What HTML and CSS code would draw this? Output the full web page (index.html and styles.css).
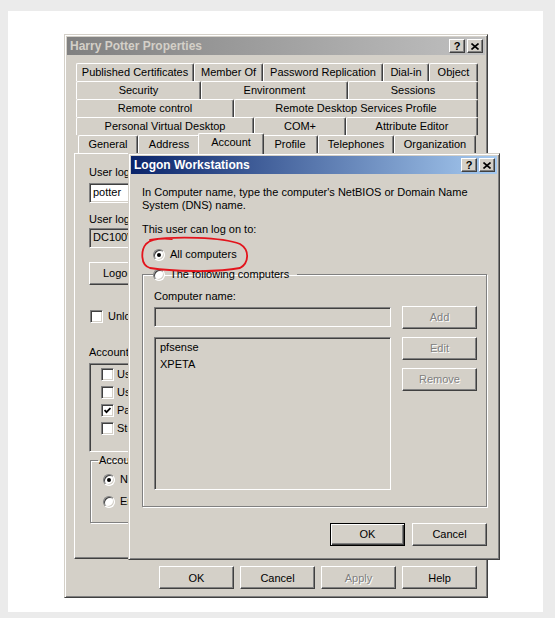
FILE: index.html
```html
<!DOCTYPE html>
<html lang="en">
<head>
  <meta charset="UTF-8">
  <meta name="viewport" content="width=device-width, initial-scale=1.0">
  <title>Harry Potter Properties - Logon Workstations</title>
  <link rel="stylesheet" href="styles.css">
</head>
<body>
  <div class="card">

    <!-- Back window: user properties -->
    <div class="window props">
      <div class="titlebar inactive">
        <span class="title">Harry Potter Properties</span>
        <div class="title-btns">
          <span class="tbtn">?</span>
          <span class="tbtn"><svg width="8" height="7" viewBox="0 0 8 7"><path d="M0.5 0.5 L7.5 6.5 M7.5 0.5 L0.5 6.5" stroke="#000" stroke-width="1.6"/></svg></span>
        </div>
      </div>

      <div class="sheet">
        <div class="tabs">
          <div class="tabrow r1">
            <span class="tab">Published Certificates</span>
            <span class="tab">Member Of</span>
            <span class="tab">Password Replication</span>
            <span class="tab">Dial-in</span>
            <span class="tab">Object</span>
          </div>
          <div class="tabrow r2">
            <span class="tab">Security</span>
            <span class="tab">Environment</span>
            <span class="tab">Sessions</span>
          </div>
          <div class="tabrow r3">
            <span class="tab">Remote control</span>
            <span class="tab">Remote Desktop Services Profile</span>
          </div>
          <div class="tabrow r4">
            <span class="tab">Personal Virtual Desktop</span>
            <span class="tab">COM+</span>
            <span class="tab">Attribute Editor</span>
          </div>
          <div class="tabrow r5">
            <span class="tab">General</span>
            <span class="tab">Address</span>
            <span class="tab on">Account</span>
            <span class="tab">Profile</span>
            <span class="tab">Telephones</span>
            <span class="tab">Organization</span>
          </div>
        </div>

        <div class="panel">
          <div class="label first">User logon name:</div>
          <div class="field-row">
            <div class="field logon-name">potter</div>
            <div class="field domain">@hogwarts.local</div>
          </div>
          <div class="label second">User logon name (pre-Windows 2000):</div>
          <div class="field-row tight">
            <div class="field readonly">DC100\</div>
            <div class="field logon-name">potter</div>
          </div>
          <div class="btn-row">
            <span class="btn wide">Logon Hours...</span>
            <span class="btn wide">Log On To...</span>
          </div>
          <div class="opt unlock"><span class="check"></span>Unlock account</div>
          <div class="label options">Account options:</div>
          <div class="option-list">
            <div class="opt"><span class="check"></span>User must change password at next logon</div>
            <div class="opt"><span class="check"></span>User cannot change password</div>
            <div class="opt"><span class="check"><svg width="7" height="7" viewBox="0 0 7 7"><path d="M0.5 3 L2.5 5.2 L6.5 1" fill="none" stroke="#000" stroke-width="1.8"/></svg></span>Password never expires</div>
            <div class="opt"><span class="check"></span>Store password using reversible encryption</div>
          </div>
          <fieldset class="group expires">
            <legend>Account expires</legend>
            <div class="opt first-radio"><span class="radio on"></span>Never</div>
            <div class="opt"><span class="radio"></span>End of:</div>
          </fieldset>
        </div>
      </div>

      <div class="footer">
        <span class="btn">OK</span>
        <span class="btn">Cancel</span>
        <span class="btn disabled">Apply</span>
        <span class="btn">Help</span>
      </div>
    </div>

    <!-- Front dialog -->
    <div class="window logon">
      <div class="titlebar active">
        <span class="title">Logon Workstations</span>
        <div class="title-btns">
          <span class="tbtn">?</span>
          <span class="tbtn"><svg width="8" height="7" viewBox="0 0 8 7"><path d="M0.5 0.5 L7.5 6.5 M7.5 0.5 L0.5 6.5" stroke="#000" stroke-width="1.6"/></svg></span>
        </div>
      </div>
      <div class="dlg-body">
        <p class="intro">In Computer name, type the computer's NetBIOS or Domain Name System (DNS) name.</p>
        <p class="prompt">This user can log on to:</p>
        <div class="opt all"><span class="radio on"></span>All computers</div>
        <fieldset class="group computers">
          <legend><span class="radio"></span>The following computers</legend>
          <div class="computers-grid">
            <div class="left-col">
              <div class="label">Computer name:</div>
              <div class="field disabled name-input"></div>
              <div class="field disabled list">
                <div class="item">pfsense</div>
                <div class="item">XPETA</div>
              </div>
            </div>
            <div class="right-col">
              <span class="btn disabled">Add</span>
              <span class="btn disabled">Edit</span>
              <span class="btn disabled">Remove</span>
            </div>
          </div>
        </fieldset>
        <div class="dlg-footer">
          <span class="btn default">OK</span>
          <span class="btn">Cancel</span>
        </div>
      </div>
    </div>

    <!-- hand-drawn highlight -->
    <svg class="mark" width="535" height="601" viewBox="8 11 535 601">
      <path d="M150 240 C175 236, 222 237, 240 244 C250 250, 249 263, 240 268 C215 273, 170 271, 150 268 C140 265, 141 250, 146 244 C150 240, 160 238, 172 239" fill="none" stroke="#e3141c" stroke-width="1.8" stroke-linecap="round"/>
    </svg>
  </div>
</body>
</html>
```

FILE: styles.css
```css
:root {
  --face: #d4d0c8;
  --shadow: #808080;
  --dark: #404040;
  --light: #fff;
}

body {
  margin: 0;
  background-color: #ebebeb;
  font-family: 'Liberation Sans', Arial, sans-serif;
  font-size: 11px;
  color: #000;
}

.card {
  position: relative;
  width: 535px;
  height: 601px;
  margin: 11px 0 0 8px;
  background-color: #fff;
}

/* window frame */
.window {
  position: absolute;
  box-sizing: border-box;
  display: flex;
  flex-direction: column;
  padding: 2px;
  background-color: var(--face);
  border: 1px solid;
  border-color: var(--face) var(--dark) var(--dark) var(--face);
  box-shadow: inset 1px 1px var(--light), inset -1px -1px var(--shadow);
}

.props {
  left: 56px;
  top: 23px;
  width: 424px;
  height: 564px;
}

.logon {
  left: 120px;
  top: 142px;
  width: 372px;
  height: 407px;
}

.titlebar {
  height: 18px;
  flex: none;
  display: flex;
  align-items: center;
  justify-content: space-between;
  padding: 0 2px 0 3px;
  font-size: 12px;
  font-weight: bold;
}

.titlebar.inactive {
  background: linear-gradient(to right, #808080, #c0c0c0);
  color: var(--face);
}

.titlebar.active {
  background: linear-gradient(to right, #0a246a, #a6caf0);
  color: #fff;
}

.title-btns {
  display: flex;
  gap: 2px;
}

.tbtn {
  box-sizing: border-box;
  width: 16px;
  height: 14px;
  display: flex;
  align-items: center;
  justify-content: center;
  background-color: var(--face);
  color: #000;
  font-size: 11px;
  font-weight: bold;
  border: 1px solid;
  border-color: var(--light) var(--dark) var(--dark) var(--light);
  box-shadow: inset -1px -1px var(--shadow);
}

/* tabs */
.sheet {
  margin: 8px 7px 0;
}

.tabs {
  padding: 0 2px;
}

.tabrow {
  display: grid;
  height: 18px;
}

.r1 { grid-template-columns: 118px 69px 120px 46px 49px; }
.r2 { grid-template-columns: 125px 147px 130px; }
.r3 { grid-template-columns: 158px 244px; }
.r4 { grid-template-columns: 178px 92px 132px; }
.r5 {
  margin-left: 2px;
  grid-template-columns: 60px 62px 62px 56px 76px 82px;
}

.tab {
  box-sizing: border-box;
  height: 18px;
  border: 1px solid;
  border-bottom: none;
  border-color: var(--light) var(--dark) var(--light) var(--light);
  border-radius: 2px 2px 0 0;
  box-shadow: inset -1px 0 var(--shadow);
  background-color: var(--face);
  text-align: center;
  line-height: 16px;
  white-space: nowrap;
  overflow: hidden;
}

.tab.on {
  position: relative;
  z-index: 1;
  height: 21px;
  margin: -2px -2px 0;
}

/* property page */
.panel {
  box-sizing: border-box;
  height: 406px;
  padding: 12px 14px 0;
  overflow: hidden;
  border: 1px solid;
  border-color: var(--light) var(--dark) var(--dark) var(--light);
  box-shadow: inset -1px -1px var(--shadow);
  line-height: 13px;
  white-space: nowrap;
}

.label.second { margin-top: 10px; }
.label.options { margin-top: 23px; }

.field-row {
  display: flex;
  gap: 6px;
  margin-top: 4px;
}

.field-row.tight { margin-top: 2px; }

.field {
  box-sizing: border-box;
  height: 20px;
  padding: 0 3px;
  line-height: 16px;
  background-color: #fff;
  border: 1px solid;
  border-color: var(--shadow) var(--light) var(--light) var(--shadow);
  box-shadow: inset 1px 1px var(--dark), inset -1px -1px var(--face);
}

.field.readonly,
.field.disabled {
  background-color: var(--face);
}

.logon-name { width: 150px; }
.domain { width: 150px; }
.readonly { width: 150px; }

.btn-row {
  display: flex;
  gap: 6px;
  margin-top: 14px;
}

.btn {
  box-sizing: border-box;
  width: 75px;
  height: 23px;
  display: flex;
  align-items: center;
  justify-content: center;
  background-color: var(--face);
  border: 1px solid;
  border-color: var(--light) var(--dark) var(--dark) var(--light);
  box-shadow: inset -1px -1px var(--shadow);
}

.btn.wide { width: 100px; }

.btn.disabled {
  color: var(--shadow);
  text-shadow: 1px 1px 0 var(--light);
}

.btn.default {
  border: 1px solid #000;
  box-shadow: inset 1px 1px var(--light), inset -1px -1px var(--dark), inset -2px -2px var(--shadow);
}

.opt {
  display: flex;
  align-items: center;
  gap: 5px;
  height: 13px;
}

.opt.unlock {
  margin-top: 25px;
  margin-left: 1px;
}

.check {
  box-sizing: border-box;
  width: 13px;
  height: 13px;
  flex: none;
  display: flex;
  align-items: center;
  justify-content: center;
  background-color: #fff;
  border: 1px solid;
  border-color: var(--shadow) var(--light) var(--light) var(--shadow);
  box-shadow: inset 1px 1px var(--dark), inset -1px -1px var(--face);
}

.radio {
  position: relative;
  box-sizing: border-box;
  width: 12px;
  height: 12px;
  flex: none;
  border-radius: 50%;
  background-color: #fff;
  border: 1px solid;
  border-color: var(--shadow) var(--light) var(--light) var(--shadow);
  box-shadow: inset 1px 1px var(--dark), inset -1px -1px var(--face);
}

.radio.on::after {
  content: '';
  position: absolute;
  left: 3px;
  top: 3px;
  width: 4px;
  height: 4px;
  border-radius: 50%;
  background-color: #000;
}

.option-list {
  box-sizing: border-box;
  width: 330px;
  height: 89px;
  margin-top: 4px;
  padding: 4px 0 0 11px;
  display: flex;
  flex-direction: column;
  gap: 5px;
  border: 1px solid;
  border-color: var(--shadow) var(--light) var(--light) var(--shadow);
  box-shadow: inset 1px 1px var(--dark), inset -1px -1px var(--face);
}

.option-list .opt { gap: 3px; }

.group {
  margin: 0;
  border: 1px solid var(--shadow);
  box-shadow: inset 1px 1px var(--light), 1px 1px var(--light);
  min-width: 0;
}

.group legend {
  padding: 0 1px;
  line-height: 13px;
}

.expires {
  box-sizing: border-box;
  width: 330px;
  height: 69px;
  margin-top: 2px;
  margin-left: 1px;
  padding: 6px 7px 0;
}

.expires .opt {
  margin-left: 5px;
}

.expires .first-radio {
  margin-bottom: 9px;
}

.footer {
  display: flex;
  justify-content: flex-end;
  gap: 6px;
  margin: 7px 8px 0 0;
}

/* logon workstations dialog */
.dlg-body {
  padding: 0 10px 0 11px;
  line-height: 13px;
}

.dlg-body p {
  margin: 0;
}

.intro {
  margin-top: 12px !important;
  width: 330px;
}

.prompt {
  margin-top: 11px !important;
}

.opt.all {
  margin: 12px 0 0 11px;
}

.computers {
  box-sizing: border-box;
  height: 239px;
  margin-top: 7px;
  padding: 9px 9px 0 11px;
}

.computers legend {
  display: flex;
  align-items: center;
  gap: 5px;
  height: 13px;
  padding: 0 8px 0 0;
  margin-left: -1px;
}

.computers-grid {
  display: flex;
  gap: 11px;
}

.left-col {
  width: 239px;
}

.name-input {
  margin-top: 4px;
}

.list {
  height: 153px;
  margin-top: 10px;
  padding: 1px 0 0 5px;
  line-height: 17px;
}

.right-col {
  display: flex;
  flex-direction: column;
  gap: 8px;
  margin-top: 16px;
}

.dlg-footer {
  display: flex;
  justify-content: flex-end;
  gap: 7px;
  margin: 16px 0 0;
}

.mark {
  position: absolute;
  left: 0;
  top: 0;
  pointer-events: none;
}
```
